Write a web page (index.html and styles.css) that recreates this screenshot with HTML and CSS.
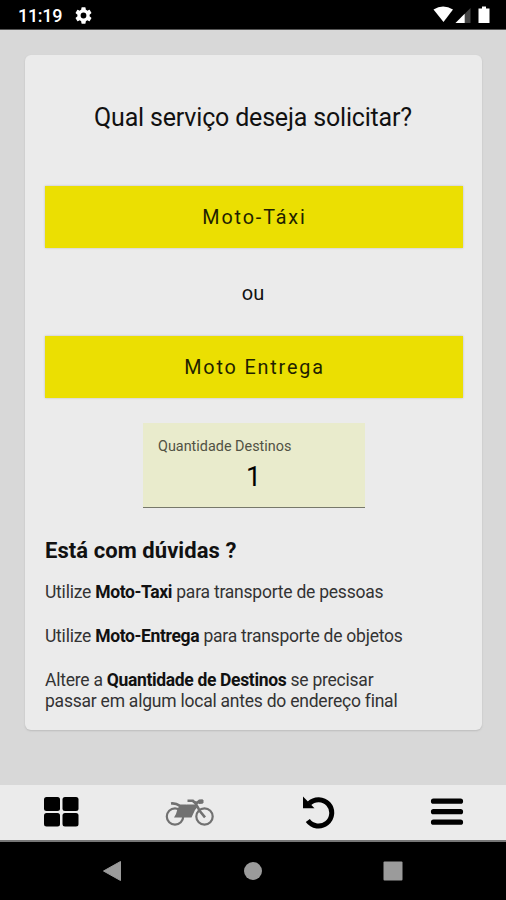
FILE: index.html
```html
<!DOCTYPE html>
<html lang="pt-BR">
<head>
<meta charset="utf-8">
<title>Qual serviço deseja solicitar?</title>
<link rel="stylesheet" href="styles.css">
</head>
<body>
<div class="screen">
  <header class="status">
    <span class="clock">11:19</span>
    <svg class="gear" width="17" height="17" viewBox="2 2 20 20"><path fill="#fff" d="M19.14 12.94c.04-.3.06-.61.06-.94s-.02-.64-.07-.94l2.03-1.58a.49.49 0 0 0 .12-.61l-1.92-3.32a.49.49 0 0 0-.59-.22l-2.39.96a7 7 0 0 0-1.62-.94l-.36-2.54a.48.48 0 0 0-.48-.41h-3.84a.47.47 0 0 0-.47.41l-.36 2.54a7 7 0 0 0-1.62.94l-2.39-.96a.48.48 0 0 0-.59.22L2.74 8.87a.48.48 0 0 0 .12.61l2.03 1.58a6 6 0 0 0 0 1.88l-2.03 1.58a.49.49 0 0 0-.12.61l1.92 3.32c.12.22.37.29.59.22l2.39-.96c.5.38 1.03.7 1.62.94l.36 2.54c.05.24.24.41.48.41h3.84c.24 0 .44-.17.47-.41l.36-2.54a7 7 0 0 0 1.62-.94l2.39.96c.22.08.47 0 .59-.22l1.92-3.32a.48.48 0 0 0-.12-.61zM12 15.4a3.4 3.4 0 1 1 0-6.8 3.4 3.4 0 0 1 0 6.8z"/></svg>
    <svg class="signals" width="60" height="20" viewBox="0 0 60 20"><path fill="#fff" d="M.5 4.600Q10 -1.400 20 4.600L10.500 17z"/><path fill="#444" d="M37.500 3v15H22.500z"/><path fill="#fff" d="M31.700 8.800V18H22.500z"/><path fill="#fff" d="M49 1.500h4v2h3.500V18h-11V3.500H49z"/></svg>
  </header>
  <main class="content">
    <section class="card">
      <h1 class="title">Qual serviço deseja solicitar?</h1>
      <button class="action">Moto-Táxi</button>
      <p class="or">ou</p>
      <button class="action">Moto Entrega</button>
      <div class="field"><span class="label">Quantidade Destinos</span><span class="value">1</span></div>
      <h2 class="help">Está com dúvidas ?</h2>
      <p class="tip t1">Utilize <b>Moto-Taxi</b> para transporte de pessoas</p>
      <p class="tip t2">Utilize <b>Moto-Entrega</b> para transporte de objetos</p>
      <p class="tip t3">Altere a <b>Quantidade de Destinos</b> se precisar<br>passar em algum local antes do endereço final</p>
    </section>
  </main>
  <nav class="tabs">
    <svg width="36" height="32" viewBox="0 0 36 32"><rect x="1" y="1" width="16" height="14" rx="2.500"/><rect x="19.500" y="1" width="16" height="14" rx="2.500"/><rect x="1" y="17" width="16" height="13.500" rx="2.500"/><rect x="19.500" y="17" width="16" height="13.500" rx="2.500"/></svg>
    <svg class="moto" width="50" height="30" viewBox="0 0 50 30"><g fill="none" stroke="#717171" stroke-width="2.200"><circle cx="10" cy="18.500" r="8.200"/><circle cx="39.500" cy="18.500" r="8.200"/><path d="M6 5.500c4-.5 6 .3 9 2.300h6.500M22.500 2.800h5.500c4 2.500 4.500 7 7 10.500l5 6M28 3.500l5 2" stroke-width="2.600"/></g><path fill="#717171" d="M14 8.500l5-.5 3-1.500h9.500l1 2.500-2.500 3-3.500 7.500H9l2-3.500 1.500-5z"/><path fill="#717171" d="M31 4l3-2.500 3.500-.3 1 1.300v2l-1 1.200-3.500.3z"/></svg>
    <svg class="undo" width="34" height="34" viewBox="0 0 34 34"><path fill="none" stroke="#000" stroke-width="5" d="M8.200 8.500A13.200 13.200 0 1 1 6.800 25.500"/><path d="M2 1.500l11.500 11.800H2z"/></svg>
    <svg class="menu" width="34" height="30" viewBox="0 0 34 30"><path stroke="#000" stroke-width="5.200" stroke-linecap="round" d="M3.500 4.200h27M3.500 14.700h27M3.500 25.200h27"/></svg>
  </nav>
  <footer class="system">
    <svg width="20" height="22" viewBox="0 0 20 22"><path fill="#9b9b9b" stroke="#9b9b9b" stroke-linejoin="round" d="M17.500 1.500v19L.5 11z"/></svg>
    <svg width="20" height="20" viewBox="0 0 20 20"><circle cx="10" cy="10" r="9" fill="#9b9b9b"/></svg>
    <svg width="20" height="20" viewBox="0 0 20 20"><rect x=".5" y=".5" width="19" height="19" rx="1" fill="#9b9b9b"/></svg>
  </footer>
</div>
</body>
</html>
```
FILE: styles.css
```css
* { box-sizing: border-box; }
body { margin: 0; font-family: Roboto, sans-serif; color: #111; }
h1, h2, p { margin: 0; }
svg { display: block; }
.screen { width: 506px; height: 900px; display: flex; flex-direction: column; background: #d8d8d8; overflow: hidden; }
.status { height: 30px; flex: none; background: #000; color: #fff; display: flex; align-items: center; padding: 2px 13px 0 18px; border-bottom: 1px solid #555; }
.clock { font-size: 18px; font-weight: 500; width: 57px; letter-spacing: -.3px; }
.signals { margin-left: auto; margin-top: -1px; }
.content { flex: 1; padding: 25px 24px 0 25px; }
.card { height: 675px; background: #ebebeb; border-radius: 6px; box-shadow: 0 1px 2px #bbb; padding: 45px 19px 0 20px; display: flex; flex-direction: column; }
.title { font-size: 25px; line-height: 36px; font-weight: 400; text-align: center; white-space: nowrap; letter-spacing: -.18px; margin-right: 2px; }
.action { margin: 50px 0 0; height: 62px; flex: none; border: 0; background: #ebdf02; color: #221f00; font: 400 19.8px Roboto, sans-serif; letter-spacing: 1.85px; box-shadow: 0 0 2px #bbb; padding: 0 0 0 1px; }
.or { height: 88px; line-height: 90px; font-size: 20px; text-align: center; padding-right: 2px; }
.or + .action { margin-top: 0; }
.field { width: 222px; height: 85px; margin: 25px 0 0 98px; padding: 13px 15px 0; background: #e9ebcc; border-bottom: 1px solid #77786a; display: flex; flex-direction: column; }
.label { font-size: 14.4px; line-height: 22px; color: #515244; }
.value { font-size: 27px; line-height: 38px; text-align: center; color: #000; padding-right: 1px; }
.help { margin-top: 28px; font-size: 22px; line-height: 30px; font-weight: 700; letter-spacing: .06px; }
.tip { font-size: 17.5px; line-height: 20px; color: #333; white-space: nowrap; letter-spacing: -.23px; }
.tip b { color: #111; letter-spacing: -.35px; }
.t1 { margin-top: 16px; }
.t2, .t3 { margin-top: 24px; }
.t3 { line-height: 20.5px; }
.tabs { height: 57px; flex: none; background: #ebebeb; border-bottom: 2px solid #777; display: flex; align-items: center; padding: 0 0 2px 43px; }
.moto { margin: 2px 0 0 86px; }
.undo { margin-left: 86px; }
.menu { margin-left: 95px; }
.system { height: 58px; flex: none; background: #000; display: flex; align-items: center; justify-content: space-between; padding: 0 103px; }
```
